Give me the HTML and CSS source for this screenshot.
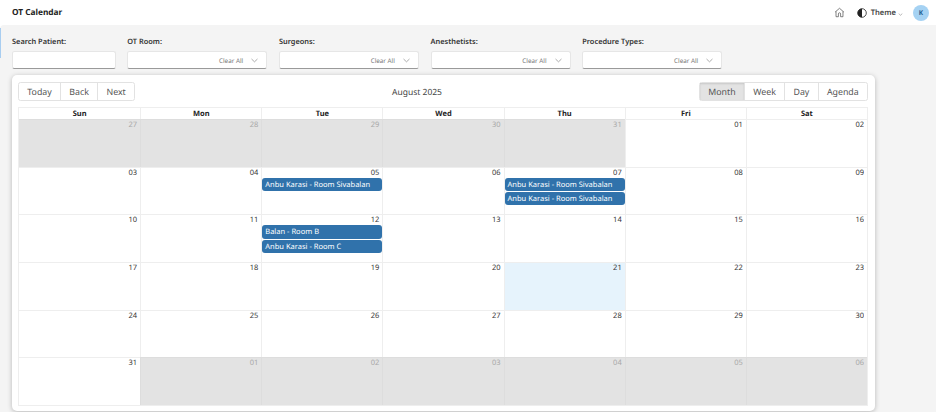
FILE: index.html
```html
<!DOCTYPE html>
<html lang="en">
<head>
<meta charset="utf-8">
<title>OT Calendar</title>
<link rel="stylesheet" href="styles.css">
</head>
<body>
<header class="topbar">
  <div class="brand">OT Calendar</div>
  <div class="top-actions">
    <svg class="home" viewBox="0 0 12 12" width="11" height="11"><path d="M1.2 5.6 6 1.4l4.800 4.200M2.200 4.900v5.700h2.600V7.500a1.200 1.200 0 0 1 2.400 0v3.100h2.600V4.900" fill="none" stroke="#555" stroke-width=".8"/></svg>
    <svg class="contrast" viewBox="0 0 10 10" width="10" height="10"><circle cx="5" cy="5" r="4.300" fill="#fff" stroke="#222" stroke-width=".8"/><path d="M5 .7a4.300 4.300 0 0 0 0 8.600z" fill="#222"/></svg>
    <span class="theme">Theme</span>
    <svg class="theme-caret" viewBox="0 0 6 4" width="5" height="3"><path d="M.6.8 3 3 5.400.8" fill="none" stroke="#777" stroke-width=".7"/></svg>
    <span class="avatar">K</span>
  </div>
</header>
<main class="main">
  <span class="edge"></span>
  <section class="filters">
    <div class="field search"><label>Search Patient:</label><div class="box"></div></div>
    <div class="field"><label>OT Room:</label><div class="box"><span class="clear">Clear All</span><svg class="caret" viewBox="0 0 8 5" width="7" height="5"><path d="M.6.800 4 4 7.400.8" fill="none" stroke="#888" stroke-width=".8"/></svg></div></div>
    <div class="field"><label>Surgeons:</label><div class="box"><span class="clear">Clear All</span><svg class="caret" viewBox="0 0 8 5" width="7" height="5"><path d="M.6.800 4 4 7.400.8" fill="none" stroke="#888" stroke-width=".8"/></svg></div></div>
    <div class="field"><label>Anesthetists:</label><div class="box"><span class="clear">Clear All</span><svg class="caret" viewBox="0 0 8 5" width="7" height="5"><path d="M.6.800 4 4 7.400.8" fill="none" stroke="#888" stroke-width=".8"/></svg></div></div>
    <div class="field"><label>Procedure Types:</label><div class="box"><span class="clear">Clear All</span><svg class="caret" viewBox="0 0 8 5" width="7" height="5"><path d="M.6.800 4 4 7.400.8" fill="none" stroke="#888" stroke-width=".8"/></svg></div></div>
  </section>
  <section class="card">
    <div class="toolbar">
      <div class="btns"><span>Today</span><span>Back</span><span>Next</span></div>
      <div class="label">August 2025</div>
      <div class="btns"><span class="active">Month</span><span>Week</span><span>Day</span><span>Agenda</span></div>
    </div>
    <div class="cal">
      <div class="head">Sun</div><div class="head">Mon</div><div class="head">Tue</div><div class="head">Wed</div><div class="head">Thu</div><div class="head">Fri</div><div class="head">Sat</div>

      <div class="day off"><span>27</span></div><div class="day off"><span>28</span></div><div class="day off"><span>29</span></div><div class="day off"><span>30</span></div><div class="day off"><span>31</span></div><div class="day"><span>01</span></div><div class="day"><span>02</span></div>

      <div class="day"><span>03</span></div><div class="day"><span>04</span></div>
      <div class="day"><span>05</span><div class="ev">Anbu Karasi - Room Sivabalan</div></div>
      <div class="day"><span>06</span></div>
      <div class="day"><span>07</span><div class="ev">Anbu Karasi - Room Sivabalan</div><div class="ev">Anbu Karasi - Room Sivabalan</div></div>
      <div class="day"><span>08</span></div><div class="day"><span>09</span></div>

      <div class="day"><span>10</span></div><div class="day"><span>11</span></div>
      <div class="day"><span>12</span><div class="ev">Balan - Room B</div><div class="ev">Anbu Karasi - Room C</div></div>
      <div class="day"><span>13</span></div><div class="day"><span>14</span></div><div class="day"><span>15</span></div><div class="day"><span>16</span></div>

      <div class="day"><span>17</span></div><div class="day"><span>18</span></div><div class="day"><span>19</span></div><div class="day"><span>20</span></div><div class="day today"><span>21</span></div><div class="day"><span>22</span></div><div class="day"><span>23</span></div>

      <div class="day"><span>24</span></div><div class="day"><span>25</span></div><div class="day"><span>26</span></div><div class="day"><span>27</span></div><div class="day"><span>28</span></div><div class="day"><span>29</span></div><div class="day"><span>30</span></div>

      <div class="day"><span>31</span></div><div class="day off"><span>01</span></div><div class="day off"><span>02</span></div><div class="day off"><span>03</span></div><div class="day off"><span>04</span></div><div class="day off"><span>05</span></div><div class="day off"><span>06</span></div>
    </div>
  </section>
</main>
</body>
</html>
```
FILE: styles.css
```css
* { box-sizing: border-box; }
html, body { margin: 0; height: 412px; overflow: hidden; }
body { width: 936px; background: #fff; font-family: "Noto Sans", "Open Sans", sans-serif; color: #333; text-rendering: geometricPrecision; }

.topbar { height: 25px; display: flex; align-items: center; justify-content: space-between; padding: 0 7px 0 12px; background: #fff; }
.brand { font-size: 8.300px; font-weight: 700; color: #222; }
.top-actions { display: flex; align-items: center; }
.home { margin-right: 12px; }
.contrast { margin-right: 4px; }
.theme { font-size: 7.600px; font-weight: 600; color: #444; }
.theme-caret { margin: 3px 10px 0 2px; }
.avatar { width: 16px; height: 16px; border-radius: 50%; background: #a5d2f3; color: #1d5c8e; font-size: 6.500px; font-weight: 700; display: flex; align-items: center; justify-content: center; }

.main { position: relative; height: 387px; background: #f4f4f4; padding: 12px 61px 0 12px; border-top-left-radius: 4px; }
.edge { position: absolute; left: 0; top: 3px; width: 1px; height: 30px; background: #a8cdf0; }

.filters { display: flex; gap: 11.700px; height: 38px; }
.field { width: 140px; display: flex; flex-direction: column; }
.field.search { width: 103.500px; }
.field label { font-size: 7.400px; font-weight: 600; color: #333; height: 14px; line-height: 10px; }
.box { height: 18px; background: #fff; border: 1px solid #e6e6e6; border-bottom: 1px solid #9a9a9a; border-radius: 2.500px; display: flex; align-items: center; justify-content: flex-end; padding-right: 8px; }
.clear { font-size: 6.300px; color: #777; margin-right: 8px; }
.caret { display: block; }

.card { height: 336px; background: #fff; border-radius: 5px; box-shadow: 0 1px 5px rgba(0,0,0,.25); padding: 7px 7px 0 6px; }
.toolbar { display: flex; align-items: center; justify-content: space-between; height: 19px; margin-bottom: 6px; position: relative; }
.btns { display: flex; height: 19px; border: 1px solid #e2e2e2; border-radius: 2.500px; }
.btns span { display: flex; align-items: center; padding: 0 8.300px; font-size: 8.800px; color: #555; border-left: 1px solid #e2e2e2; }
.btns span:first-child { border-left: 0; }
.btns .active { background: #e3e3e3; box-shadow: inset 0 1px 2px rgba(0,0,0,.12); }
.label { font-size: 8.500px; color: #444; position: absolute; left: 374px; top: 4.500px; }

.cal { display: grid; grid-template-columns: repeat(7, 1fr); grid-template-rows: 11px repeat(6, 47.670px); border: 1px solid #eee; }
.head { font-size: 7.500px; font-weight: 700; color: #222; text-align: center; line-height: 12.500px; border-left: 1px solid #eee; }
.head:first-child, .day:nth-child(7n+1) { border-left: 0; }
.day { border-left: 1px solid #eee; border-top: 1px solid #eee; min-width: 0; }
.day > span { display: block; text-align: right; font-size: 7.500px; line-height: 10px; color: #333; padding-right: 3px; height: 10px; opacity: .99; }
.off { background: #e3e3e3; border-color: #ddd; }
.off > span { color: #a8a8a8; }
.today { background: #e6f3fc; }
.ev { height: 13.500px; margin-bottom: .7px; background: #3072ab; color: #fff; border-radius: 3px; font-size: 7.500px; line-height: 14px; padding-left: 3px; white-space: nowrap; overflow: hidden; }
```
